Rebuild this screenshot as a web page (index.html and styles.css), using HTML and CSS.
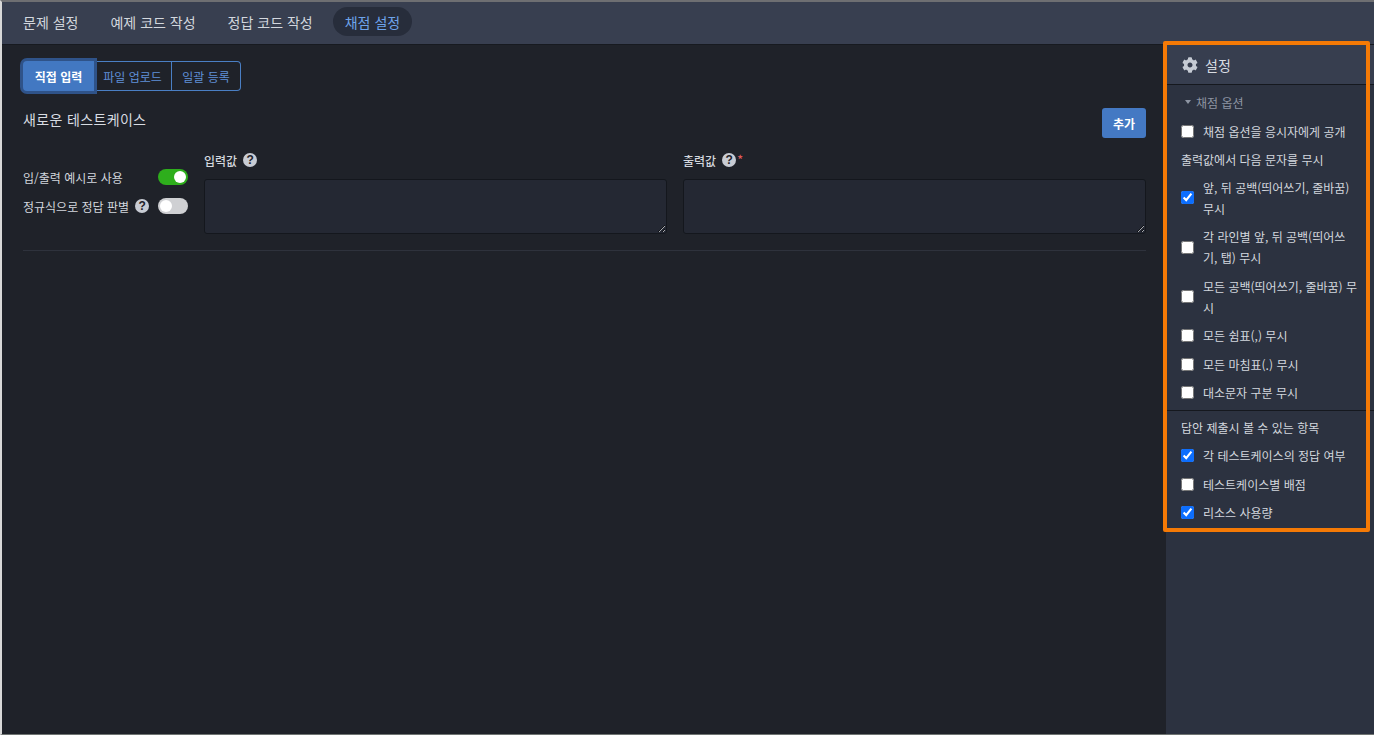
FILE: index.html
```html
<!DOCTYPE html>
<html lang="ko">
<head>
<meta charset="utf-8">
<title>채점 설정</title>
<link rel="stylesheet" href="styles.css">
</head>
<body>
<div class="frame">
  <nav class="tabs">
    <a class="tab">문제 설정</a>
    <a class="tab">예제 코드 작성</a>
    <a class="tab">정답 코드 작성</a>
    <a class="tab active">채점 설정</a>
  </nav>
  <div class="body">
    <main class="main">
      <div class="segmented">
        <button class="seg on">직접 입력</button>
        <button class="seg mid">파일 업로드</button>
        <button class="seg last">일괄 등록</button>
      </div>
      <div class="title-row">
        <h2 class="title">새로운 테스트케이스</h2>
        <button class="add">추가</button>
      </div>
      <div class="case">
        <div class="opts">
          <div class="opt"><span>입/출력 예시로 사용</span><span class="switch switch-on"><i></i></span></div>
          <div class="opt"><span class="opt-label">정규식으로 정답 판별 <span class="help">?</span></span><span class="switch"><i></i></span></div>
        </div>
        <div class="field">
          <label class="field-label">입력값 <span class="help">?</span></label>
          <textarea class="area"></textarea>
        </div>
        <div class="field">
          <label class="field-label">출력값 <span class="help">?</span><em class="req">*</em></label>
          <textarea class="area"></textarea>
        </div>
      </div>
      <hr class="rule">
    </main>
    <aside class="side">
      <header class="side-head">
        <svg class="gear" viewBox="0 0 512 512" width="16" height="16"><path fill="#c6cbd4" d="M487.4 315.7l-42.6-24.6c4.3-23.2 4.3-47 0-70.2l42.6-24.6c4.9-2.8 7.1-8.6 5.5-14-11.1-35.6-30-67.8-54.7-94.6-3.8-4.1-10-5.1-14.8-2.3L380.8 110c-17.9-15.4-38.5-27.3-60.8-35.1V25.8c0-5.6-3.9-10.5-9.4-11.7-36.7-8.2-74.3-7.8-109.2 0-5.5 1.2-9.4 6.1-9.4 11.7V75c-22.2 7.9-42.8 19.8-60.8 35.1L88.7 85.5c-4.9-2.8-11-1.9-14.8 2.3-24.7 26.7-43.6 58.9-54.7 94.6-1.7 5.4.6 11.2 5.5 14L67.3 221c-4.3 23.2-4.3 47 0 70.2l-42.6 24.6c-4.9 2.8-7.1 8.6-5.5 14 11.1 35.6 30 67.8 54.7 94.6 3.8 4.1 10 5.1 14.8 2.3l42.6-24.6c17.9 15.4 38.5 27.3 60.8 35.1v49.2c0 5.6 3.9 10.5 9.4 11.7 36.7 8.2 74.3 7.8 109.2 0 5.5-1.2 9.4-6.1 9.4-11.7v-49.2c22.2-7.9 42.8-19.8 60.8-35.1l42.6 24.6c4.9 2.8 11 1.9 14.8-2.3 24.7-26.7 43.6-58.9 54.7-94.6 1.5-5.5-.7-11.3-5.6-14.1zM256 336c-44.1 0-80-35.9-80-80s35.9-80 80-80 80 35.9 80 80-35.9 80-80 80z"/></svg>
        <span>설정</span>
      </header>
      <section class="side-sec">
        <div class="caret-row"><span class="caret"></span>채점 옵션</div>
        <label class="chk"><input type="checkbox"><span>채점 옵션을 응시자에게 공개</span></label>
        <p class="sub">출력값에서 다음 문자를 무시</p>
        <label class="chk"><input type="checkbox" checked><span>앞, 뒤 공백(띄어쓰기, 줄바꿈) 무시</span></label>
        <label class="chk"><input type="checkbox"><span>각 라인별 앞, 뒤 공백(띄어쓰기, 탭) 무시</span></label>
        <label class="chk"><input type="checkbox"><span>모든 공백(띄어쓰기, 줄바꿈) 무시</span></label>
        <label class="chk"><input type="checkbox"><span>모든 쉼표(,) 무시</span></label>
        <label class="chk"><input type="checkbox"><span>모든 마침표(.) 무시</span></label>
        <label class="chk"><input type="checkbox"><span>대소문자 구분 무시</span></label>
      </section>
      <section class="side-sec second">
        <p class="sub">답안 제출시 볼 수 있는 항목</p>
        <label class="chk"><input type="checkbox" checked><span>각 테스트케이스의 정답 여부</span></label>
        <label class="chk"><input type="checkbox"><span>테스트케이스별 배점</span></label>
        <label class="chk"><input type="checkbox" checked><span>리소스 사용량</span></label>
      </section>
    </aside>
  </div>
</div>
<div class="highlight"></div>
</body>
</html>
```
FILE: styles.css
```css
* { box-sizing: border-box; }
html, body { margin: 0; height: 100%; }
body {
  background: #1f2229;
  color: #d5d9e0;
  font-family: "Noto Sans CJK KR", "Noto Sans", sans-serif;
  font-size: 12px;
  overflow: hidden;
}
.frame {
  height: 735px;
  display: flex;
  flex-direction: column;
  border-top: 2px solid #6e6f72;
  border-left: 2px solid #d8d8d8;
  border-bottom: 1px solid #6f7472;
}
.tabs {
  height: 43px;
  flex: none;
  display: flex;
  align-items: center;
  gap: 8px;
  padding: 0 0 3px 9px;
  background: #383f50;
  border-bottom: 1px solid #171a20;
}
.tab {
  padding: 1px 12px 0;
  font-size: 14px;
  line-height: 29px;
  height: 29px;
  color: #d3d7de;
  border-radius: 15px;
}
.tab.active { background: #272d3b; color: #6ea4ec; }
.body { flex: 1; display: flex; min-height: 0; }
.main { flex: 1; padding: 16px 20px 0 21px; background: #1f2229; }
.segmented {
  display: flex;
  width: fit-content;
  height: 30px;
}
.seg {
  font: inherit;
  font-size: 12px;
  height: 30px;
  padding: 0;
  background: transparent;
  color: #5f90d8;
  border: 1px solid #4a7fc4;
  border-left: 0;
}
.seg.on {
  width: 71px;
  background: #4278c2;
  color: #fff;
  font-weight: 700;
  border: 0;
  border-radius: 4px 0 0 4px;
  box-shadow: 0 0 0 3px #2f5389;
  position: relative;
}
.seg.mid { width: 78px; }
.seg.last { width: 69px; border-radius: 0 4px 4px 0; }
.title-row {
  display: flex;
  justify-content: space-between;
  align-items: flex-start;
  margin-top: 17px;
}
.title { margin: 0; font-size: 14px; line-height: 22px; font-weight: 400; letter-spacing: .35px; color: #d8dce2; }
.add {
  width: 44px;
  height: 30px;
  font: inherit;
  font-size: 12px;
  font-weight: 700;
  color: #fff;
  background: #4479c3;
  border: 0;
  border-radius: 3px;
}
.case { display: flex; gap: 16px; margin-top: 12px; }
.opts { width: 165px; flex: none; padding-top: 17px; display: flex; flex-direction: column; gap: 9px; }
.opt { display: flex; justify-content: space-between; align-items: center; height: 20px; color: #d3d7de; }
.opt-label { display: inline-flex; align-items: center; gap: 6px; }
.switch {
  width: 30px;
  height: 16px;
  border-radius: 8px;
  background: #cfd0d3;
  display: flex;
  padding: 2px;
}
.switch i { width: 12px; height: 12px; border-radius: 50%; background: #fff; }
.switch-on { background: #2eae1c; justify-content: flex-end; }
.help {
  display: inline-flex;
  align-items: center;
  justify-content: center;
  width: 14px;
  height: 14px;
  border-radius: 50%;
  background: #c8ccd4;
  color: #1f2229;
  font-size: 12px;
  font-weight: 700;
  line-height: 1;
  font-family: "Liberation Sans", sans-serif;
}
.field { flex: 1; min-width: 0; }
.field-label { display: flex; align-items: center; gap: 6px; height: 20px; margin-bottom: 9px; font-weight: 500; color: #d3d7de; }
.req { font-style: normal; color: #e05a5a; margin-left: -5px; position: relative; top: -2px; }
.area {
  display: block;
  width: 100%;
  height: 55px;
  background: #242833;
  border: 1px solid #14171d;
  border-radius: 3px;
  resize: vertical;
}
.rule { margin: 16px 0 0; border: 0; border-top: 1px solid #2e323c; }
.side { width: 208px; flex: none; background: #2c3240; display: flex; flex-direction: column; }
.side-head {
  height: 40px;
  flex: none;
  display: flex;
  align-items: center;
  gap: 7px;
  padding-left: 16px;
  background: #373e4f;
  border-bottom: 1px solid #15181e;
  font-size: 14px;
  color: #d8dce2;
}
.side-sec { padding: 0 16px 0 15px; display: flex; flex-direction: column; }
.second { border-top: 1px solid #15181e; margin-top: 3px; padding-top: 3px; }
.caret-row {
  display: flex;
  align-items: center;
  gap: 5px;
  height: 32px;
  padding-top: 2px;
  padding-left: 4px;
  color: #8e95a3;
}
.caret { width: 0; height: 0; border: 3px solid transparent; border-top: 4px solid #8e95a3; border-bottom: 0; }
.chk { display: flex; align-items: center; gap: 9px; min-height: 28.5px; padding: 3.5px 0 4px; line-height: 21px; color: #d3d7de; }
.chk input { appearance: auto; width: 13px; height: 13px; margin: 0; flex: none; accent-color: #0d6efd; }
.sub { margin: 0; height: 27.5px; line-height: 27px; font-weight: 400; color: #d3d7de; }
.highlight {
  position: absolute;
  left: 1163px;
  top: 41px;
  width: 207px;
  height: 491px;
  border: 4px solid #f57a06;
  border-radius: 2px;
  pointer-events: none;
}
```
